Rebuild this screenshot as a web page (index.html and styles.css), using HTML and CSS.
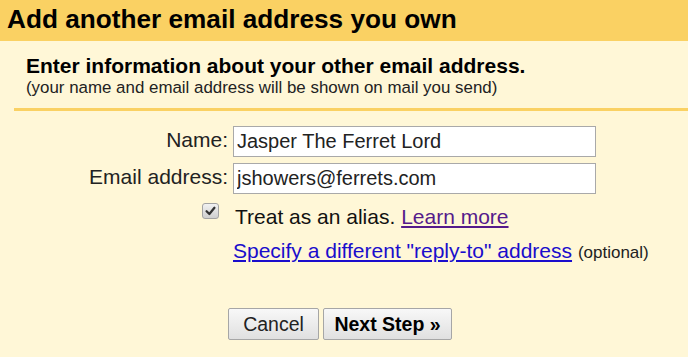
FILE: index.html
```html
<!DOCTYPE html>
<html>
<head>
<meta charset="utf-8">
<link rel="stylesheet" href="styles.css">
</head>
<body>
<div class="header"><h1 class="title">Add another email address you own</h1></div>
<div class="intro">
  <div class="intro-title">Enter information about your other email address.</div>
  <div class="intro-note">(your name and email address will be shown on mail you send)</div>
</div>
<div class="divider"></div>
<div class="form">
  <label class="label" for="n">Name:</label>
  <input class="field" id="n" type="text" value="Jasper The Ferret Lord">
  <label class="label" for="e">Email address:</label>
  <input class="field" id="e" type="text" value="jshowers@ferrets.com">
  <div class="check-cell">
    <span class="checkbox"><svg width="16" height="16" viewBox="0 0 16 16"><path d="M3.8 8.2 L6.8 11.2 L12.2 4.6" fill="none" stroke="#333" stroke-width="2.4" stroke-linecap="round" stroke-linejoin="round"/></svg></span>
  </div>
  <div class="alias">Treat as an alias. <a class="visited" href="#">Learn more</a></div>
  <div></div>
  <div class="reply"><a class="link" href="#">Specify a different "reply-to" address</a> <span class="optional">(optional)</span></div>
</div>
<div class="buttons">
  <button class="btn btn-cancel">Cancel</button>
  <button class="btn btn-next">Next Step »</button>
</div>
</body>
</html>
```
FILE: styles.css
```css
html, body {
  margin: 0;
  padding: 0;
}
body {
  background: #fff7d7;
  font-family: "Liberation Sans", Arial, sans-serif;
  color: #222;
  width: 688px;
  height: 357px;
  overflow: hidden;
}
.header {
  background: #fad163;
  height: 41px;
  padding-left: 7px;
}
.title {
  margin: 0;
  font-size: 26.2px;
  font-weight: bold;
  line-height: 39px;
  color: #000;
}
.intro {
  margin-top: 13px;
  padding-left: 26px;
}
.intro-title {
  font-size: 21px;
  font-weight: bold;
  line-height: 24px;
  color: #000;
}
.intro-note {
  font-size: 16.9px;
  line-height: 20px;
  color: #222;
}
.divider {
  margin: 10px 0 0 14px;
  height: 3px;
  background: #fad163;
}
.form {
  margin-top: 15px;
  display: grid;
  grid-template-columns: 228px 363px;
  column-gap: 5px;
  row-gap: 6px;
  font-size: 21px;
}
.label {
  text-align: right;
  line-height: 27px;
  padding-bottom: 4px;
  color: #222;
  white-space: nowrap;
}
.field {
  box-sizing: border-box;
  height: 31px;
  width: 363px;
  margin: 0;
  border: 1px solid #a9a9a9;
  background: #fff;
  padding: 0 3px;
  font-family: "Liberation Sans", Arial, sans-serif;
  font-size: 20px;
  color: #222;
  outline: none;
}
.check-cell {
  display: flex;
  justify-content: flex-end;
  align-items: flex-start;
  padding-right: 9px;
  margin-top: 3px;
}
.checkbox {
  box-sizing: border-box;
  width: 17px;
  height: 16px;
  border: 1px solid #a3a3a3;
  border-radius: 3px;
  background: linear-gradient(#f2f2f2, #cfcfcf);
  display: flex;
  align-items: center;
  justify-content: center;
}
.checkbox svg {
  display: block;
}
.alias {
  margin-top: 3px;
  line-height: 28px;
  padding-left: 2px;
  white-space: nowrap;
  color: #111;
}
.reply {
  line-height: 28px;
  white-space: nowrap;
}
.visited {
  color: #551a8b;
  text-decoration: underline;
}
.link {
  color: #1a0dcc;
  text-decoration: underline;
}
.optional {
  font-size: 17px;
  color: #222;
}
.buttons {
  display: flex;
  gap: 4px;
  padding-left: 228px;
  margin-top: 41px;
}
.btn {
  box-sizing: border-box;
  height: 32px;
  margin: 0;
  padding: 0;
  border: 1px solid #a6a6a6;
  border-radius: 2px;
  background: linear-gradient(#f8f8f8, #e0e0e0);
  font-family: "Liberation Sans", Arial, sans-serif;
  font-size: 19.5px;
  color: #222;
  text-align: center;
}
.btn-cancel {
  width: 91px;
}
.btn-next {
  width: 129px;
  font-weight: bold;
  color: #000;
}
```
